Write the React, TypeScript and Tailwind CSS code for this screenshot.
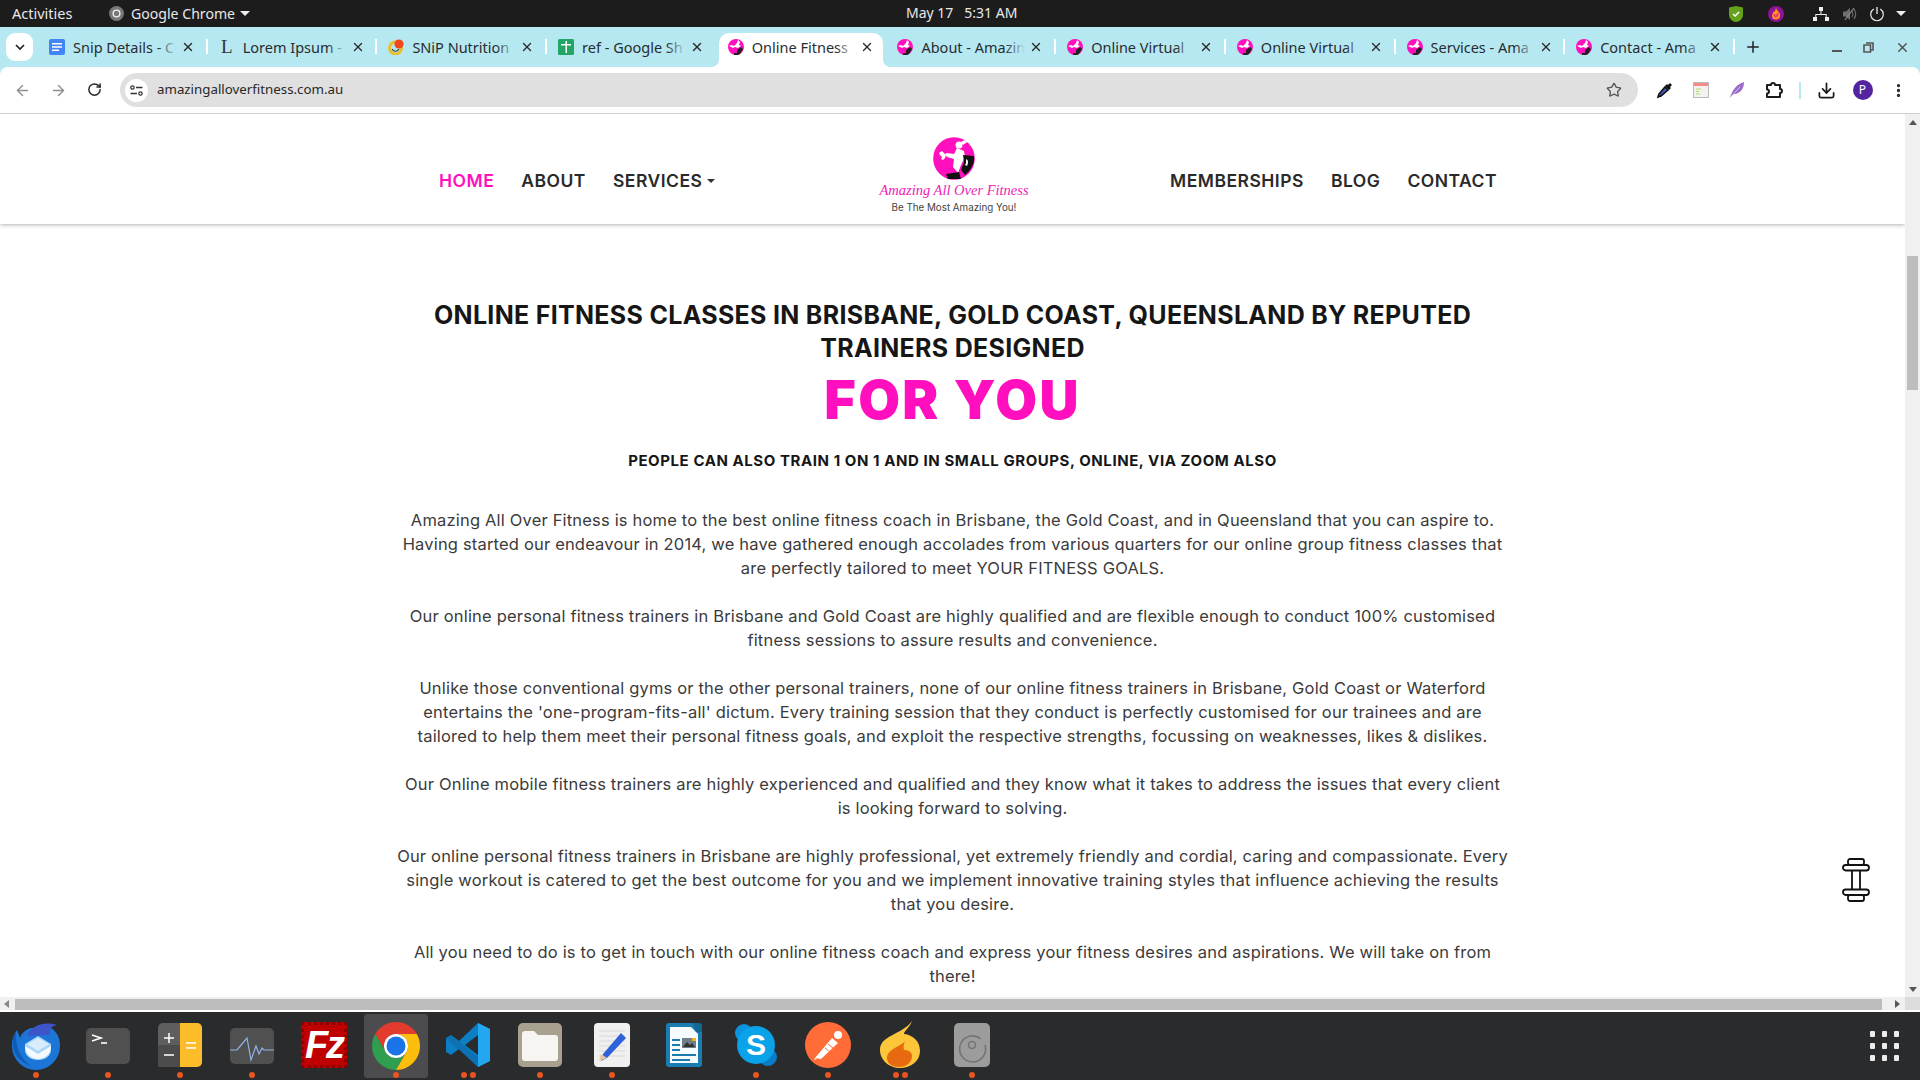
import { ReactNode } from "react";
import {
  ArrowLeft,
  ArrowRight,
  Download,
  MoreVertical,
  Plus,
  RotateCw,
  Star,
  X,
} from "lucide-react";

const tabs = [
  { title: "Snip Details - C", icon: "docs", separator: true },
  { title: "Lorem Ipsum -", icon: "lorem", separator: true },
  { title: "SNiP Nutrition", icon: "snip", separator: true },
  { title: "ref - Google Sh", icon: "sheets" },
  { title: "Online Fitness", icon: "site", active: true },
  { title: "About - Amazin", icon: "site", separator: true },
  { title: "Online Virtual", icon: "site", separator: true },
  { title: "Online Virtual", icon: "site", separator: true },
  { title: "Services - Ama", icon: "site", separator: true },
  { title: "Contact - Ama", icon: "site", separator: true },
];

const paragraphs = [
  [
    "Amazing All Over Fitness is home to the best online fitness coach in Brisbane, the Gold Coast, and in Queensland that you can aspire to.",
    "Having started our endeavour in 2014, we have gathered enough accolades from various quarters for our online group fitness classes that",
    "are perfectly tailored to meet YOUR FITNESS GOALS.",
  ],
  [
    "Our online personal fitness trainers in Brisbane and Gold Coast are highly qualified and are flexible enough to conduct 100% customised",
    "fitness sessions to assure results and convenience.",
  ],
  [
    "Unlike those conventional gyms or the other personal trainers, none of our online fitness trainers in Brisbane, Gold Coast or Waterford",
    "entertains the 'one-program-fits-all' dictum. Every training session that they conduct is perfectly customised for our trainees and are",
    "tailored to help them meet their personal fitness goals, and exploit the respective strengths, focussing on weaknesses, likes & dislikes.",
  ],
  [
    "Our Online mobile fitness trainers are highly experienced and qualified and they know what it takes to address the issues that every client",
    "is looking forward to solving.",
  ],
  [
    "Our online personal fitness trainers in Brisbane are highly professional, yet extremely friendly and cordial, caring and compassionate. Every",
    "single workout is catered to get the best outcome for you and we implement innovative training styles that influence achieving the results",
    "that you desire.",
  ],
  [
    "All you need to do is to get in touch with our online fitness coach and express your fitness desires and aspirations. We will take on from",
    "there!",
  ],
];

function SiteFavicon() {
  return (
    <svg width="16" height="16" viewBox="0 0 16 16">
      <circle cx="8" cy="8" r="8" fill="#ff0fbd" />
      <path d="M1 7l3-1 2 1 3-3 1-3 2 2-1 3 2 1-3 2-3-1-2 1z" fill="#fff" />
      <path d="M9 11l4-3 2 2-3 5-2 1-4 0 0-2 3 0z" fill="#222" />
    </svg>
  );
}

function Favicon({ name }: { name: string }) {
  if (name === "docs") {
    return (
      <svg width="16" height="16" viewBox="0 0 16 16">
        <rect width="16" height="16" y="0" rx="2" fill="#4285f4" />
        <path d="M3 4h10v1.600H3zM3 7.200h10v1.600H3zM3 10.400h7V12H3z" fill="#fff" />
      </svg>
    );
  }
  if (name === "lorem") {
    return <span className="w-4 text-center font-['Liberation_Serif',serif] text-[19px] leading-4 text-[#333]">L</span>;
  }
  if (name === "snip") {
    return (
      <svg width="16" height="16" viewBox="0 0 16 16">
        <circle cx="7.500" cy="9" r="6" fill="none" stroke="#e8c02c" strokeWidth="3" />
        <path d="M4 10c2 3 5 3 7 0" fill="none" stroke="#3a3a2a" strokeWidth="1.200" />
        <circle cx="11" cy="5" r="4.600" fill="#f2481f" />
      </svg>
    );
  }
  if (name === "sheets") {
    return (
      <svg width="16" height="16" viewBox="0 0 16 16">
        <rect width="16" height="16" rx="1.500" fill="#23a566" />
        <path d="M3 5h4.500V2h1.500v3h4v1.500H9V14H7.500V6.500H3z" fill="#fff" />
      </svg>
    );
  }
  return <SiteFavicon />;
}

function Tab({ title, icon, active, separator }: { title: string; icon: string; active?: boolean; separator?: boolean }) {
  const fade = active ? "from-white/0 to-white" : "from-[#b6e8f2]/0 to-[#b6e8f2]";
  return (
    <div className="relative h-full w-[169.7px] shrink-0 pt-[6px]">
      <div
        className={`relative flex h-[34px] w-[164px] items-center rounded-t-[10px] pb-[7px] pl-[9px] ${active ? "bg-white" : ""}`}
      >
        <Favicon name={icon} />
        <div className="relative ml-[8px] w-[104px] overflow-hidden whitespace-nowrap text-[14.5px] leading-5 text-[#282c30]">
          {title}
          <div className={`absolute inset-y-0 right-0 w-5 bg-gradient-to-r ${fade}`} />
        </div>
        <X size={14} strokeWidth={2.4} className="ml-[4px] text-[#2a2a2a]" />
        {active && (
          <>
            <div className="absolute bottom-0 left-[-8px] h-2 w-2 bg-[radial-gradient(circle_at_0_0,transparent_8px,white_8px)]" />
            <div className="absolute bottom-0 right-[-8px] h-2 w-2 bg-[radial-gradient(circle_at_100%_0,transparent_8px,white_8px)]" />
          </>
        )}
      </div>
      {separator && <div className="absolute right-[2px] top-[12px] h-[15px] w-[2px] bg-white" />}
    </div>
  );
}

function TopBar() {
  return (
    <div className="flex h-[27px] shrink-0 items-center bg-[#1c1c1c] text-[14.5px] text-[#e8e8e8]">
      <span className="ml-[12px] w-[97px]">Activities</span>
      <svg width="15" height="15" viewBox="0 0 16 16">
        <circle cx="8" cy="8" r="8" fill="#777" />
        <circle cx="8" cy="8" r="3.600" fill="none" stroke="#eee" strokeWidth="1.500" />
      </svg>
      <span className="ml-[7px] text-[14.1px]">Google Chrome</span>
      <div className="ml-[5px] h-0 w-0 border-x-[5px] border-t-[5px] border-x-transparent border-t-[#eee]" />
      <div className="absolute left-[906px] top-[3px] text-[14px] leading-5">May 17&nbsp;&nbsp;&nbsp;5:31 AM</div>
      <div className="ml-auto flex items-center">
        <svg width="16" height="18" viewBox="0 0 16 18">
          <path d="M1 2.500 8 1l7 1.500V10c0 4-4 7-7 7s-7-3-7-7z" fill="#64a21e" />
          <path d="M5 9l2.200 2L11 7" fill="none" stroke="#fff" strokeWidth="1.600" />
        </svg>
        <svg width="16" height="18" viewBox="0 0 16 18" className="ml-[24px]">
          <circle cx="8" cy="9" r="8" fill="#8e129a" />
          <path d="M8 3c1 3 4 4 4 7a4 4 0 0 1-8 1c0-2 1-2 1-4 1 0 2 0 3-4z" fill="#ff9a1f" />
          <path d="M5.500 8l2 2 3-3v4l-3 2-2-2z" fill="#f23b6c" />
        </svg>
        <svg width="16" height="16" viewBox="0 0 16 16" className="ml-[29px]">
          <path d="M6 1h4v4H6zM0 11h4v4H0zM12 11h4v4h-4zM7.500 5h1v3h5.200v3h-1V9H3.300v2h-1V8h5.200z" fill="#eee" />
        </svg>
        <svg width="16" height="16" viewBox="0 0 16 16" className="ml-[13px]">
          <path d="M1 5.500h3L8 2v12l-4-3.500H1z" fill="#6e6e6e" />
          <path d="M10 5c1 1.500 1 4.500 0 6M12 3c2 3 2 7 0 10" stroke="#6e6e6e" strokeWidth="1.200" fill="none" />
          <path d="M3 14 12 2" stroke="#8a8a8a" strokeWidth="1.200" />
        </svg>
        <svg width="16" height="16" viewBox="0 0 16 16" className="ml-[11px]">
          <path d="M8 1v7" stroke="#eee" strokeWidth="1.300" />
          <path d="M4.800 3A6.300 6.300 0 1 0 11.200 3" stroke="#eee" strokeWidth="1.200" fill="none" />
        </svg>
        <div className="ml-[11px] mr-[14px] h-0 w-0 border-x-[5px] border-t-[5px] border-x-transparent border-t-[#eee]" />
      </div>
    </div>
  );
}

function TabStrip() {
  return (
    <div className="flex h-[40px] shrink-0 items-center bg-[#b6e8f2]">
      <div className="ml-[6px] mt-[6px] flex h-[28px] w-[27px] items-center justify-center self-start rounded-[9px] bg-white">
        <svg width="10" height="7" viewBox="0 0 10 7">
          <path d="M1 1l4 4 4-4" fill="none" stroke="#222" strokeWidth="1.700" />
        </svg>
      </div>
      <div className="ml-[7px] flex h-full">
        {tabs.map((t, i) => (
          <Tab key={i} title={t.title} icon={t.icon} active={t.active} separator={t.separator} />
        ))}
      </div>
      <Plus size={18} strokeWidth={2} className="ml-[7px] text-[#222]" />
      <div className="ml-auto flex items-center text-[#444]">
        <div className="mr-[21px] mt-[8px] h-[2px] w-[10px] bg-[#555]" />
        <svg width="11" height="11" viewBox="0 0 11 11" className="mr-[21px]">
          <path d="M3 1h7v7H8M1 3h6.500v7H1z" fill="none" stroke="#555" strokeWidth="1.600" />
        </svg>
        <X size={15} strokeWidth={2.4} className="mr-[10px] text-[#555]" />
      </div>
    </div>
  );
}

function Toolbar() {
  return (
    <div className="shrink-0 bg-[#b6e8f2]">
      <div className="flex h-[46px] items-center rounded-t-[8px] bg-white">
        <div className="ml-[4px] flex">
          <div className="flex w-[36px] justify-center"><ArrowLeft size={17} strokeWidth={2} className="text-[#8f8f8f]" /></div>
          <div className="flex w-[36px] justify-center"><ArrowRight size={17} strokeWidth={2} className="text-[#8f8f8f]" /></div>
          <div className="flex w-[36px] justify-center"><RotateCw size={15} strokeWidth={2.4} className="text-[#2a2a2a]" /></div>
        </div>
        <div className="ml-[8px] flex h-[34px] w-[1518px] items-center rounded-full bg-[#e0e0e0]">
          <div className="ml-[5px] flex h-[23px] w-[23px] items-center justify-center rounded-full bg-white">
            <svg width="13" height="11" viewBox="0 0 13 11">
              <circle cx="2.500" cy="2.500" r="1.700" fill="none" stroke="#333" strokeWidth="1.200" />
              <path d="M6 2.500h6.500M0.500 8.500H7" stroke="#333" strokeWidth="1.500" />
              <circle cx="10.500" cy="8.500" r="1.700" fill="none" stroke="#333" strokeWidth="1.200" />
            </svg>
          </div>
          <span className="ml-[9px] text-[13.3px] text-[#282828]">amazingalloverfitness.com.au</span>
          <Star size={16} strokeWidth={2} className="ml-auto mr-[16px] text-[#555]" />
        </div>
        <div className="ml-[9px] flex items-center">
          <div className="flex w-[36px] justify-center">
            <svg width="18" height="18" viewBox="0 0 18 18">
              <path d="M3 13 9 6l3 3-7 6-3 1z" fill="#4a58c0" stroke="#111" strokeWidth="1.600" />
              <path d="M9 5l4 4 2-2-1-1 2-2-2-2-2 2-1-1z" fill="#111" />
            </svg>
          </div>
          <div className="flex w-[36px] justify-center">
            <svg width="16" height="16" viewBox="0 0 16 16">
              <rect x="0.500" y="0.500" width="15" height="15" fill="#f4f2ee" stroke="#bbb" />
              <rect x="1" y="1" width="14" height="3" fill="#f58a8a" />
              <path d="M3 7h5M3 9.500h3M3 12h4" stroke="#a8dc70" strokeWidth="1" />
            </svg>
          </div>
          <div className="flex w-[36px] justify-center">
            <svg width="16" height="18" viewBox="0 0 16 18">
              <path d="M1 17C3 9 8 3 15 1c0 6-3 11-9 12-2 0-4 2-5 4z" fill="#9b6cc8" />
              <path d="M1 17 11 6" stroke="#e5d8f2" strokeWidth="0.800" />
            </svg>
          </div>
          <div className="flex w-[37px] justify-center">
            <svg width="18" height="18" viewBox="0 0 18 18">
              <path d="M2 4h4a2 2 0 0 1 4 0h5v4a2 2 0 0 1 0 4v4H2v-3.500a2 2 0 0 0 0-4z" fill="none" stroke="#1c1c1c" strokeWidth="2" strokeLinejoin="round" />
            </svg>
          </div>
          <div className="ml-[6.5px] h-[17px] w-[2px] bg-[#b6e8f2]" />
          <div className="ml-[8px] flex w-[36px] justify-center">
            <Download size={19} strokeWidth={2.2} className="text-[#1c1c1c]" />
          </div>
          <div className="flex w-[36px] justify-center">
            <div className="flex h-[20px] w-[20px] items-center justify-center rounded-full bg-[#5323a0] text-[12px] text-white">P</div>
          </div>
          <div className="flex w-[36px] justify-center">
            <MoreVertical size={17} strokeWidth={2.6} className="text-[#222]" />
          </div>
        </div>
      </div>
      <div className="h-px bg-[#cfcfcf]" />
    </div>
  );
}

function Logo() {
  return (
    <div className="flex w-[150px] flex-col items-center pt-[23px] font-normal tracking-normal">
      <svg width="42" height="43" viewBox="0 0 42 43">
        <ellipse cx="21" cy="21.500" rx="20.800" ry="21.300" fill="#ff0fbd" />
        <circle cx="26" cy="8" r="3.500" fill="#fff" />
        <path d="M28 5c3-2 5-2 7 0-2 0-3 2-5 3z" fill="#fff" />
        <path d="M24 11 31 14l1 6-4 8-3 8-5-6 1-8-7-2-2-3 2-1 7 1z" fill="#fff" />
        <path d="M6 16l3-2 1 1 3 3-1 3-2 2-2-1 1-2-2-2z" fill="#fff" />
        <path d="M30 18l11 1c1 7-3 14-9 19l-4-5 3-8z" fill="#111" />
        <path d="M33 22c2 1 3 3 1 7l-2-1 1-2z" fill="#fff" />
        <path d="M13 37l13-2 2 7H15z" fill="#111" />
      </svg>
      <div className="whitespace-nowrap font-['Liberation_Serif',serif] text-[14.5px] italic leading-5 text-[#f01cb4]">Amazing All Over Fitness</div>
      <div className="whitespace-nowrap text-[9.8px] leading-4 text-[#444]">Be The Most Amazing You!</div>
    </div>
  );
}

function Header() {
  return (
    <header className="flex h-[110px] shrink-0 items-start pl-[439px] font-['Inter',sans-serif] text-[17.5px] font-semibold tracking-[0.5px] text-[#2a2a2a] shadow-[0_1px_4px_rgba(0,0,0,0.3)]">
      <nav className="flex w-[440px] gap-[27px] pt-[55px] leading-6">
        <span className="text-[#ff0fbd]">HOME</span>
        <span>ABOUT</span>
        <span className="flex items-center">
          SERVICES
          <span className="ml-[5px] h-0 w-0 border-x-[4px] border-t-[4px] border-x-transparent border-t-[#333]" />
        </span>
      </nav>
      <Logo />
      <nav className="ml-[141px] flex gap-[27px] pt-[55px] leading-6">
        <span>MEMBERSHIPS</span>
        <span>BLOG</span>
        <span>CONTACT</span>
      </nav>
    </header>
  );
}

function Content() {
  return (
    <div className="relative flex-1 overflow-hidden font-['Inter',sans-serif]">
      <Header />
      <div className="text-center">
        <h1 className="mt-[75px] text-[25px] font-bold leading-[33px] tracking-[0.3px] text-[#161616]">
          ONLINE FITNESS CLASSES IN BRISBANE, GOLD COAST, QUEENSLAND BY REPUTED
          <br />
          TRAINERS DESIGNED
        </h1>
        <div className="mt-[5px] text-[54px] font-black leading-[60px] tracking-[2.3px] text-[#ff0fbd]">FOR YOU</div>
        <h2 className="mt-[19px] text-[15px] font-bold leading-6 tracking-[0.57px] text-[#161616]">
          PEOPLE CAN ALSO TRAIN 1 ON 1 AND IN SMALL GROUPS, ONLINE, VIA ZOOM ALSO
        </h2>
        <div className="mt-[35px] flex flex-col gap-6 text-[16.5px] leading-6 tracking-[0.18px] text-[#3b3b3b]">
          {paragraphs.map((lines, i) => (
            <p key={i}>
              {lines.map((line, j) => (
                <span key={j} className="block whitespace-nowrap">{line}</span>
              ))}
            </p>
          ))}
        </div>
      </div>
      <svg width="28" height="44" viewBox="0 0 28 44" className="absolute left-[1842px] top-[744px]" fill="#fff" stroke="#111" strokeWidth="1.800">
        <rect x="6" y="1" width="16" height="6" rx="2" />
        <rect x="10" y="12" width="8" height="20" />
        <rect x="1" y="7" width="26" height="5.500" rx="2.700" />
        <rect x="1" y="31.500" width="26" height="5.500" rx="2.700" />
        <rect x="6" y="37" width="16" height="6" rx="2" />
      </svg>
    </div>
  );
}

function VerticalScrollbar() {
  return (
    <div className="flex w-[15px] shrink-0 flex-col bg-[#f0f0f0]">
      <div className="mx-auto mt-[6px] h-0 w-0 border-x-[4px] border-b-[5px] border-x-transparent border-b-[#555]" />
      <div className="mx-auto mt-[131px] h-[134px] w-[11px] bg-[#bdbdbd]" />
      <div className="mx-auto mb-[5px] mt-auto h-0 w-0 border-x-[4px] border-t-[5px] border-x-transparent border-t-[#555]" />
    </div>
  );
}

function HorizontalScrollbar() {
  return (
    <div className="flex h-[13px] shrink-0 items-end bg-[#f0f0f0]">
      <div className="mb-[2px] ml-[4px] h-0 w-0 border-y-[4px] border-r-[5px] border-y-transparent border-r-[#888]" />
      <div className="ml-[6px] h-[11px] w-[1867px] bg-[#bdbdbd]" />
      <div className="mb-[2px] ml-[13px] h-0 w-0 border-y-[4px] border-l-[5px] border-y-transparent border-l-[#555]" />
      <div className="ml-auto h-full w-[15px] bg-[#dcdcdc]" />
    </div>
  );
}

function DockItem({ dots = 1, active, children }: { dots?: number; active?: boolean; children: ReactNode }) {
  return (
    <div className={`relative mx-[4px] flex h-[64px] w-[64px] items-start justify-center rounded-[3px] pt-[8px] ${active ? "bg-[#4c4c4e]" : ""}`}>
      {children}
      {dots > 0 && (
        <div className="absolute bottom-0 left-0 right-0 flex justify-center gap-[3px]">
          {Array.from({ length: dots }).map((_, i) => (
            <span key={i} className="h-[6px] w-[6px] rounded-full bg-[#e95420]" />
          ))}
        </div>
      )}
    </div>
  );
}

function Dock() {
  return (
    <div className="flex h-[70px] shrink-0 items-center border-t-[2px] border-white bg-[#2a2b2d]">
      <DockItem>
        <svg width="50" height="48" viewBox="0 0 50 48">
          <path d="M6 8C2 14 1 18 1 24a24 24 0 0 0 48 0c0-8-3-14-9-18H20C14 8 10 12 9 16z" fill="#1b76d8" />
          <path d="M16 14C20 3 34-1 46 3c-6 1-8 4-7 10z" fill="#3d55c8" />
          <path d="M5 10c-1 12 3 26 15 34C8 40 0 30 2 16z" fill="#0d5cb8" />
          <path d="M14 22l13-8 13 8v6c0 6-6 10-13 10s-13-4-13-10z" fill="#a9d6f7" />
          <path d="M14 24l13 8 13-8c0 8-6 13-13 13s-13-5-13-13z" fill="#f4f9fe" />
          <path d="M16 22l11-6 11 6-11 7z" fill="#d8ecfb" />
        </svg>
      </DockItem>
      <DockItem>
        <svg width="44" height="36" viewBox="0 0 44 36" className="mt-[6px]">
          <rect width="44" height="36" rx="5" fill="#505050" />
          <path d="M6 7l9 3-9 3" fill="none" stroke="#fff" strokeWidth="1.600" />
          <path d="M15 15h6" stroke="#fff" strokeWidth="1.600" />
        </svg>
      </DockItem>
      <DockItem>
        <svg width="44" height="44" viewBox="0 0 44 44" className="mt-[1px]">
          <rect width="44" height="44" rx="5" fill="#5e5e5e" />
          <rect y="22" width="22" height="22" fill="#4c4c4c" />
          <path d="M22 0h17a5 5 0 0 1 5 5v34a5 5 0 0 1-5 5H22z" fill="#fdbd2b" />
          <path d="M6 15h10M11 10v10M6 32h10M28 20h10M28 25h10" stroke="#fff" strokeWidth="1.500" />
        </svg>
      </DockItem>
      <DockItem>
        <svg width="44" height="36" viewBox="0 0 44 36" className="mt-[6px]">
          <rect width="44" height="36" rx="5" fill="#505050" />
          <path d="M0 22h7l5-6 5-6 4 22 5-14 3 8 3-6 2 2h15" fill="none" stroke="#8fb3ea" strokeWidth="1.200" />
        </svg>
      </DockItem>
      <DockItem dots={0}>
        <div className="flex h-[46px] w-[46px] items-center justify-center rounded-[3px] border-[3px] border-dotted border-[#8e0000] bg-[#bf0000] font-['Liberation_Sans',sans-serif] text-[38px] font-bold italic leading-none tracking-[-2px] text-white">
          Fz
        </div>
      </DockItem>
      <DockItem active>
        <svg width="48" height="48" viewBox="0 0 48 48">
          <path d="M24 12h20.780A24 24 0 0 0 3.220 12L13.600 30A12 12 0 0 1 24 12z" fill="#e33b2e" />
          <path d="M3.220 12A24 24 0 0 0 24 48L34.400 30A12 12 0 0 1 13.600 30z" fill="#2f9e4f" />
          <path d="M24 48A24 24 0 0 0 44.780 12H24A12 12 0 0 1 34.400 30z" fill="#fdbd0d" />
          <circle cx="24" cy="24" r="12" fill="#fff" />
          <circle cx="24" cy="24" r="9.500" fill="#1a73e8" />
        </svg>
      </DockItem>
      <DockItem dots={2}>
        <svg width="44" height="44" viewBox="0 0 44 44" className="mt-[1px]">
          <path d="M32 0 44 6v32l-12 6L13 26l-8 6-5-3v-14l5-3 8 6z" fill="#0b7ec4" />
          <path d="M32 0 44 6v32l-12 6z" fill="#24a7f0" />
          <path d="M32 12 19 22l13 10z" fill="#2a2b2d" />
          <path d="M0 15l5-3 27 22v10z" fill="#0f69a8" opacity="0.600" />
        </svg>
      </DockItem>
      <DockItem>
        <svg width="44" height="44" viewBox="0 0 44 44" className="mt-[1px]">
          <rect width="44" height="44" rx="5" fill="#a9a18f" />
          <path d="M4 11a3 3 0 0 1 3-3h9l4 4h17a3 3 0 0 1 3 3v20a3 3 0 0 1-3 3H7a3 3 0 0 1-3-3z" fill="#f7f5f2" />
        </svg>
      </DockItem>
      <DockItem>
        <svg width="36" height="44" viewBox="0 0 36 44" className="mt-[1px]">
          <rect width="36" height="44" rx="4" fill="#f0f0f0" />
          <path d="M5 8h26M5 13h26M5 18h26M5 23h26M5 28h26M5 33h26" stroke="#d8d8d8" strokeWidth="1" />
          <path d="M27 10l5 5-19 20-6 3 2-7z" fill="#2f62d8" />
          <path d="M5 38l2-7 6 4z" fill="#e8c8a0" />
        </svg>
      </DockItem>
      <DockItem dots={0}>
        <svg width="36" height="44" viewBox="0 0 36 44" className="mt-[1px]">
          <path d="M3 0h24l9 9v32a3 3 0 0 1-3 3H3a3 3 0 0 1-3-3V3a3 3 0 0 1 3-3z" fill="#1a7cb0" />
          <path d="M4 4h21l7 7v29H4z" fill="#f6fbff" />
          <path d="M27 0h6a3 3 0 0 1 3 3v6h-6z" fill="#146894" />
          <path d="M6 16h8v2H6zM6 21h8v2H6zM6 26h8v2H6zM6 31h24v2H6zM6 36h18v2H6z" fill="#1a7cb0" />
          <rect x="16" y="15" width="14" height="10" fill="#6f7f88" />
          <path d="M17 24l4-5 3 3 2-2 3 4z" fill="#333" />
          <rect x="26" y="15" width="4" height="3" fill="#f6b21b" />
        </svg>
      </DockItem>
      <DockItem>
        <svg width="42" height="44" viewBox="0 0 42 42" className="mt-[1px]">
          <circle cx="9" cy="9" r="9" fill="#0a94e0" />
          <circle cx="33" cy="33" r="9" fill="#0a7cc8" />
          <circle cx="21" cy="21" r="19" fill="#0aa2e8" />
          <text x="21" y="31" textAnchor="middle" fontFamily="Liberation Sans, sans-serif" fontSize="30" fontWeight="700" fill="#fff">S</text>
        </svg>
      </DockItem>
      <DockItem>
        <svg width="46" height="46" viewBox="0 0 46 46">
          <circle cx="23" cy="23" r="23" fill="#ff6c37" />
          <path d="M10 36 27 16l6 5L16 37z" fill="#fff" />
          <path d="M20 26l5 4M23 22l5 4" stroke="#ff6c37" strokeWidth="1" />
          <circle cx="33" cy="13" r="4" fill="#fff" />
          <path d="M10 36 9 38l3-1z" fill="#fff" />
        </svg>
      </DockItem>
      <DockItem dots={2}>
        <svg width="40" height="48" viewBox="0 0 40 48" className="mt-[-1px]">
          <path d="M32 0C30 6 24 10 24 13 33 14 40 20 40 30 40 40 31 47 20 47 9 47 0 39 0 29 0 14 22 14 32 0z" fill="#fdc63a" />
          <path d="M25 20C22 25 7 28 7 37 7 43 13 46 19 46 27 46 32 41 32 35 32 30 27 29 24 29 23 26 24 23 25 20z" fill="#e86a10" />
        </svg>
      </DockItem>
      <DockItem>
        <svg width="36" height="44" viewBox="0 0 36 44" className="mt-[1px]">
          <rect width="36" height="44" rx="5" fill="#9c9c9c" />
          <path d="M27 13a13 13 0 1 0 4 6" fill="none" stroke="#747474" strokeWidth="1.600" transform="translate(0 3)" />
          <circle cx="18" cy="22" r="3.500" fill="none" stroke="#747474" strokeWidth="1.600" />
        </svg>
      </DockItem>
      <div className="ml-auto mr-[21px] grid grid-cols-3 gap-[6.500px]">
        {Array.from({ length: 9 }).map((_, i) => (
          <span key={i} className="h-[5.500px] w-[5.500px] rounded-[1px] bg-[#ededed]" />
        ))}
      </div>
    </div>
  );
}

export default function App() {
  return (
    <div className="relative flex h-[1080px] w-[1920px] flex-col overflow-hidden bg-white font-['Noto_Sans',sans-serif]">
      <TopBar />
      <TabStrip />
      <Toolbar />
      <div className="flex min-h-0 flex-1">
        <Content />
        <VerticalScrollbar />
      </div>
      <HorizontalScrollbar />
      <Dock />
    </div>
  );
}
